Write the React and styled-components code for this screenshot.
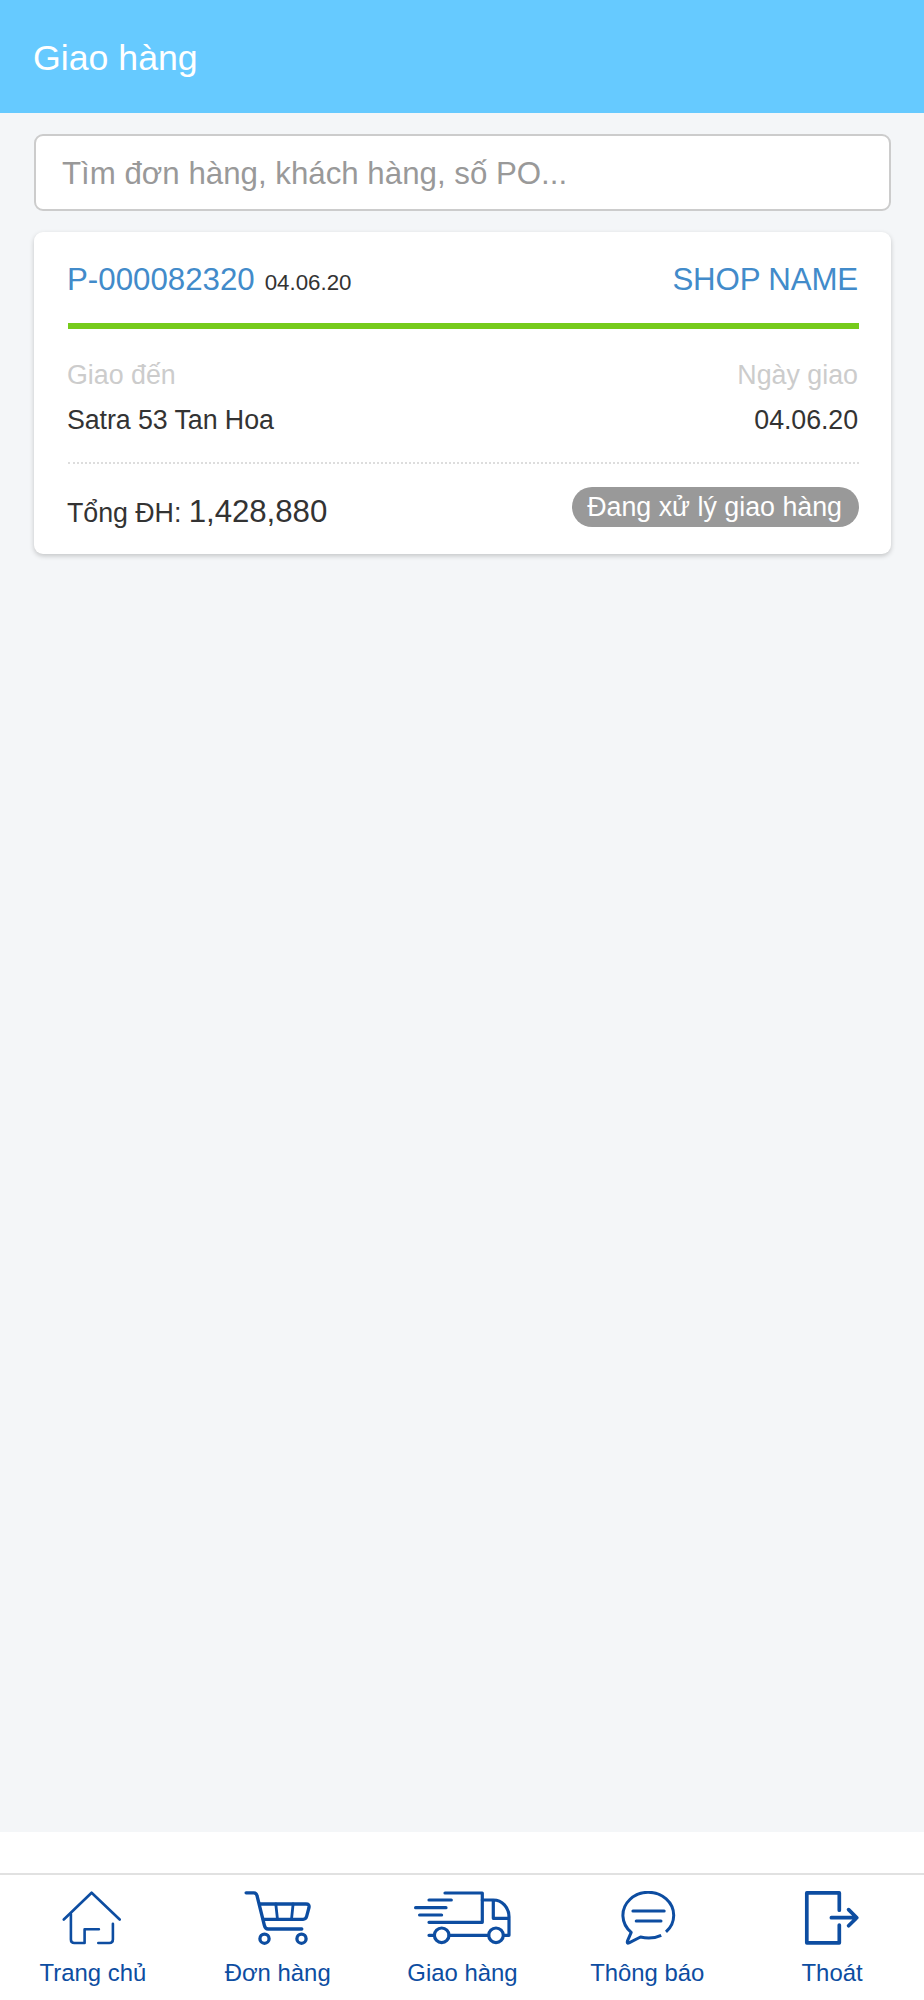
import React, { useState } from 'react';
import styled, { createGlobalStyle } from 'styled-components';

const GlobalStyle = createGlobalStyle`
  * {
    box-sizing: border-box;
  }

  body {
    margin: 0;
    background: #f4f6f8;
    color: #333;
    font-family: 'Liberation Sans', Arial, sans-serif;
  }
`;

const Page = styled.div`
  display: flex;
  flex-direction: column;
  height: 2000px;
`;

const Header = styled.header`
  height: 112.5px;
  padding: 38px 33px 0;
  background: #66caff;
  color: #fff;
  font-size: 35.7px;
  line-height: 41px;
`;

const Content = styled.main`
  flex: 1;
  display: flex;
  flex-direction: column;
  gap: 21px;
  padding: 21.5px 33px 0 34px;
`;

const SearchInput = styled.input`
  width: 100%;
  height: 77px;
  padding: 2px 26px 0;
  border: 2px solid #ccc;
  border-radius: 9px;
  background: #fff;
  font-family: inherit;
  font-size: 31.25px;
  outline: none;

  &::placeholder {
    color: #999;
    opacity: 1;
  }
`;

const Card = styled.section`
  height: 321.5px;
  padding: 25px 32px 0 34px;
  border-radius: 9px;
  background: #fff;
  box-shadow: 0 2px 5px rgba(0, 0, 0, 0.2);
`;

const Row = styled.div`
  display: flex;
  justify-content: space-between;
  align-items: baseline;
`;

const CardHead = styled(Row)`
  height: 72px;
  padding-top: 1px;
  border-bottom: 6px solid #76cb1b;
  line-height: 44px;
`;

const CardBody = styled(Row)`
  height: 135px;
  padding-top: 24px;
  border-bottom: 2px dotted #ddd;
  font-size: 26.8px;
  line-height: 44.6px;
`;

const CardFoot = styled(Row)`
  align-items: flex-start;
  padding-top: 23px;
  font-size: 26.8px;
`;

const OrderLink = styled.a`
  color: #428bca;
  font-size: 31.25px;
  text-decoration: none;
`;

const OrderCode = styled(OrderLink)`
  margin-left: -1px;
`;

const ShopLink = styled(OrderLink)`
  margin-right: 1px;
  letter-spacing: -0.15px;
`;

const OrderDate = styled.span`
  margin-left: 10px;
  font-size: 22.3px;
`;

const Field = styled.div`
  margin: 0 1px 0 -1px;
  text-align: ${(props) => props.$align || 'left'};
`;

const Label = styled.div`
  color: #ccc;
`;

const Value = styled.div`
  letter-spacing: -0.08px;
`;

const Total = styled.div`
  margin-left: -1px;
  padding-top: 3px;
  line-height: 44px;
  letter-spacing: -0.05px;
`;

const Amount = styled.span`
  font-size: 31.25px;
`;

const Badge = styled.span`
  height: 40px;
  padding: 0 17px 0 15px;
  border-radius: 20px;
  background: #999;
  color: #fff;
  line-height: 41px;
  white-space: nowrap;
`;

const BottomBar = styled.footer`
  height: 168px;
  padding-top: 41px;
  background: #fff;
`;

const Nav = styled.nav`
  display: flex;
  border-top: 2px solid #e1e1e1;
`;

const NavItem = styled.a`
  flex: 1 1 0;
  display: flex;
  flex-direction: column;
  align-items: center;
  padding-top: 16px;
  color: #0d4da1;
  font-size: 23.9px;
  line-height: 28px;
  text-decoration: none;
`;

const NavLabel = styled.span`
  padding-left: 1px;
`;

const Icon = styled.svg`
  display: block;
  height: 54px;
  margin-bottom: 14px;
  fill: none;
  stroke: currentColor;
  stroke-linecap: round;
  stroke-linejoin: round;
`;

const HomeIcon = () => (
  <Icon width="60" viewBox="0 0 60 54" strokeWidth="2.6">
    <path d="M1.8 28.5 29.6 1.7 57.7 28.5" />
    <path d="M8.9 23V48.5Q8.9 52 12.4 52H22.6V38.3H36.9M36.3 52H47.4Q50.9 52 50.9 48.5V32.7" />
  </Icon>
);

const CartIcon = () => (
  <Icon width="68" viewBox="0 0 68 54" strokeWidth="3.3">
    <path d="M3.1 1.8H10.8Q13.4 1.8 14.1 5L21.4 34.5Q22.3 38 25 38H58.8" />
    <path d="M16.8 13H63Q66.7 13 66 16.5L63.7 25.2Q62.9 28.3 60.1 28.3H20.4" />
    <path d="M32.8 13 34.5 28.3M50.1 13 48.5 28.3" strokeWidth="2.8" />
    <circle cx="21.5" cy="47.7" r="4.6" />
    <circle cx="58.5" cy="47.7" r="4.6" />
  </Icon>
);

const TruckIcon = () => (
  <Icon width="98" viewBox="0 0 98 54" strokeWidth="3.2">
    <path d="M32 2H69.3V31.3H16M16 9H38.3M2.6 16.7H33M6.6 24H28.6" />
    <path d="M69.3 9H80.3C89 9 96 16.5 96 25.7V44.3H91M80.3 9V27.3H96" />
    <path d="M16 44.3H21.4M36 44.3H75.7" />
    <circle cx="28.7" cy="44.3" r="7.3" />
    <circle cx="83" cy="44.3" r="7.3" />
  </Icon>
);

const ChatIcon = () => (
  <Icon width="58" viewBox="0 0 58 54" strokeWidth="3">
    <path
      d="M48 40.8A25.4 23 0 1 0 13.2 41.3L9.4 50.2Q8.8 53 11 51.8L22.5 46Q33.5 48.8 43.2 44.3"
      strokeLinecap="butt"
    />
    <path d="M14.9 20H46.2M18.2 30H43" />
  </Icon>
);

const LogoutIcon = () => (
  <Icon width="56" viewBox="0.8 0 56 54" strokeWidth="3.7">
    <path d="M36.1 19.2V1.9H3.6V51.8H36.1V34" />
    <path d="M28.2 26.7H53.4M45.4 18.6 53.6 26.7 45.4 34.8" />
  </Icon>
);

const menuList = [
  { name: 'Trang chủ', page: '#home', icon: HomeIcon },
  { name: 'Đơn hàng', page: '#orders', icon: CartIcon },
  { name: 'Giao hàng', page: '#delivery', icon: TruckIcon },
  { name: 'Thông báo', page: '#notifications', icon: ChatIcon },
  { name: 'Thoát', page: '#logout', icon: LogoutIcon },
];

const orders = [
  {
    code: 'P-000082320',
    date: '04.06.20',
    shop: 'SHOP NAME',
    shipTo: 'Satra 53 Tan Hoa',
    shipDate: '04.06.20',
    total: '1,428,880',
    status: 'Đang xử lý giao hàng',
  },
];

const OrderCard = ({ order }) => (
  <Card>
    <CardHead>
      <div>
        <OrderCode href="#order">{order.code}</OrderCode>
        <OrderDate>{order.date}</OrderDate>
      </div>
      <ShopLink href="#shop">{order.shop}</ShopLink>
    </CardHead>
    <CardBody>
      <Field>
        <Label>Giao đến</Label>
        <Value>{order.shipTo}</Value>
      </Field>
      <Field $align="right">
        <Label>Ngày giao</Label>
        <Value>{order.shipDate}</Value>
      </Field>
    </CardBody>
    <CardFoot>
      <Total>
        Tổng ĐH: <Amount>{order.total}</Amount>
      </Total>
      <Badge>{order.status}</Badge>
    </CardFoot>
  </Card>
);

const App = () => {
  const [keyword, setKeyword] = useState('');

  return (
    <Page>
      <GlobalStyle />
      <Header>Giao hàng</Header>
      <Content>
        <SearchInput
          value={keyword}
          placeholder="Tìm đơn hàng, khách hàng, số PO..."
          onChange={(e) => setKeyword(e.target.value)}
        />
        {orders.map((order) => (
          <OrderCard order={order} key={order.code} />
        ))}
      </Content>
      <BottomBar>
        <Nav>
          {menuList.map((item) => (
            <NavItem href={item.page} key={item.name}>
              <item.icon />
              <NavLabel>{item.name}</NavLabel>
            </NavItem>
          ))}
        </Nav>
      </BottomBar>
    </Page>
  );
};

export default App;
